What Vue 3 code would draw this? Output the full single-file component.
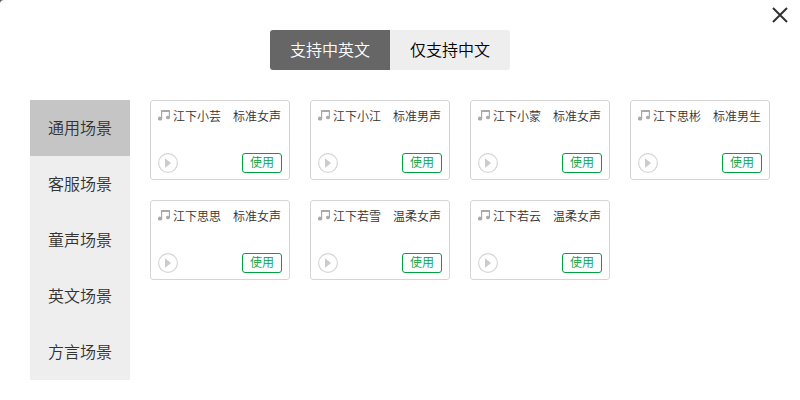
<script setup>
import { ref } from 'vue'

const languages = ['支持中英文', '仅支持中文']
const scenes = ['通用场景', '客服场景', '童声场景', '英文场景', '方言场景']
const voices = [
  { name: '江下小芸', kind: '标准女声' },
  { name: '江下小江', kind: '标准男声' },
  { name: '江下小蒙', kind: '标准女声' },
  { name: '江下思彬', kind: '标准男生' },
  { name: '江下思思', kind: '标准女声' },
  { name: '江下若雪', kind: '温柔女声' },
  { name: '江下若云', kind: '温柔女声' },
]
const language = ref(0)
const scene = ref(0)
</script>

<template>
  <main class="dialog">
    <button class="close" type="button" aria-label="关闭">
      <svg viewBox="0 0 16 16" width="16" height="16">
        <path d="M1 1L15 15M15 1L1 15" fill="none" stroke="#333" stroke-width="2" />
      </svg>
    </button>
    <div class="tabs">
      <button
        v-for="(item, i) in languages"
        :key="item"
        type="button"
        class="tab"
        :class="{ active: i === language }"
        @click="language = i"
      >{{ item }}</button>
    </div>
    <div class="content">
      <nav class="scenes">
        <button
          v-for="(item, i) in scenes"
          :key="item"
          type="button"
          class="scene"
          :class="{ active: i === scene }"
          @click="scene = i"
        >{{ item }}</button>
      </nav>
      <section class="voices">
        <article v-for="voice in voices" :key="voice.name" class="card">
          <div class="title">
            <svg class="note" viewBox="0 0 12 11" width="12" height="11">
              <path
                d="M3 0H12V7.6A2 1.8 0 1 1 10.8 5.9V2H4.2V8.6A2.1 1.9 0 1 1 3 6.9Z"
                fill="#a9a9a9"
              />
            </svg>
            <span>{{ voice.name }}</span>
            <span class="kind">{{ voice.kind }}</span>
          </div>
          <div class="actions">
            <button class="play" type="button" aria-label="播放">
              <svg viewBox="0 0 20 20" width="20" height="20">
                <circle cx="10" cy="10" r="9.4" fill="none" stroke="#d5d5d5" stroke-width="1.2" />
                <path d="M7 5.3V15L13 10.1Z" fill="#ccc" />
              </svg>
            </button>
            <button class="use" type="button">使用</button>
          </div>
        </article>
      </section>
    </div>
  </main>
</template>

<style>
body {
  background: #555;
}
</style>

<style scoped>
.dialog {
  position: relative;
  box-sizing: border-box;
  min-height: 100vh;
  padding: 30px 30px 20px;
  background: #fff;
  border-top-left-radius: 4px;
  color: #333;
  font-family: "Noto Sans CJK SC", sans-serif;
  font-weight: 350;
}

button {
  box-sizing: border-box;
  margin: 0;
  padding: 0;
  border: 0;
  background: none;
  color: inherit;
  font-family: inherit;
  font-weight: inherit;
  cursor: pointer;
}

svg {
  display: block;
}

.close {
  position: absolute;
  top: 7px;
  right: 12px;
}

.tabs {
  display: flex;
  justify-content: center;
  margin-right: 20px;
  margin-bottom: 30px;
}

.tab {
  width: 120px;
  height: 40px;
  padding-bottom: 2px;
  background: #eee;
  color: #000;
  font-size: 16px;
  line-height: 38px;
}

.tab:first-child {
  border-radius: 3px 0 0 3px;
}

.tab:last-child {
  border-radius: 0 3px 3px 0;
}

.tab.active {
  background: #666;
  color: #fff;
}

.content {
  display: flex;
  align-items: flex-start;
  gap: 20px;
}

.scenes {
  display: flex;
  flex: none;
  flex-direction: column;
  width: 100px;
  background: #eee;
}

.scene {
  height: 56px;
  padding-bottom: 2px;
  font-size: 16px;
  line-height: 54px;
}

.scene.active {
  background: #c5c5c5;
}

.voices {
  display: grid;
  flex: 1;
  grid-template-columns: repeat(auto-fill, 140px);
  gap: 20px;
}

.card {
  display: flex;
  box-sizing: border-box;
  flex-direction: column;
  justify-content: space-between;
  height: 80px;
  padding: 6px 7px;
  border: 1px solid #d5d5d5;
  border-radius: 3px;
}

.title {
  display: flex;
  align-items: center;
  gap: 3px;
  font-size: 12px;
  line-height: 18px;
  white-space: nowrap;
}

.note {
  margin-bottom: 2px;
}

.kind {
  margin-left: 9px;
}

.actions {
  display: flex;
  align-items: center;
  justify-content: space-between;
}

.use {
  width: 40px;
  height: 20px;
  padding-bottom: 2px;
  border: 1px solid #00a23f;
  border-radius: 3px;
  color: #00a23f;
  font-size: 12px;
  line-height: 16px;
}
</style>
